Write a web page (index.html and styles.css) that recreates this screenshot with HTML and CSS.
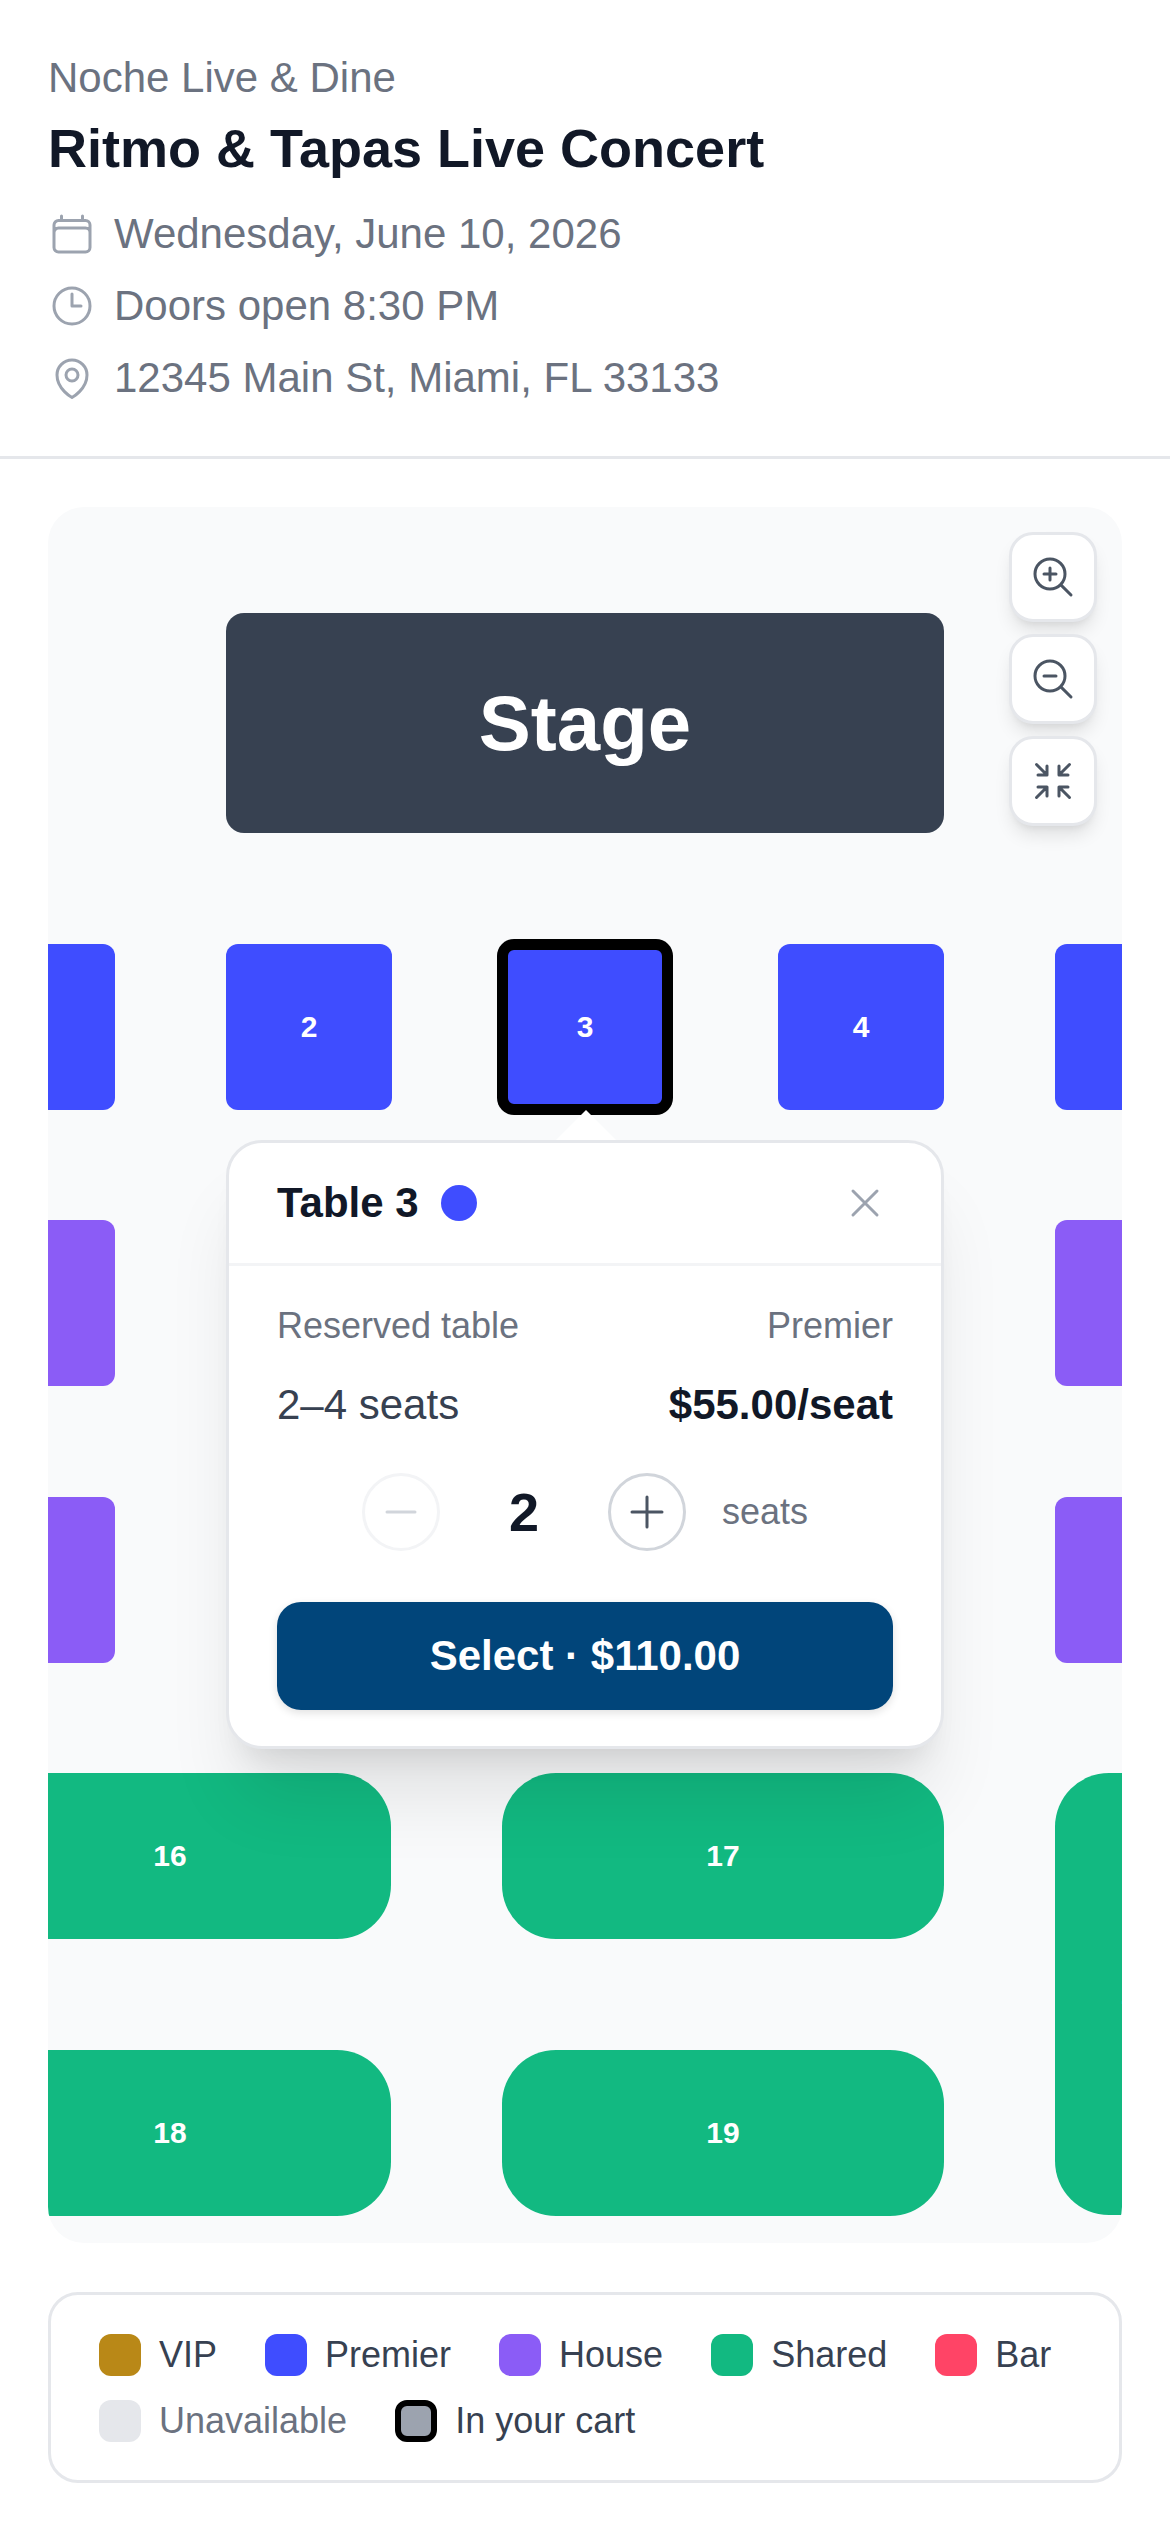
FILE: index.html
```html
<!DOCTYPE html>
<html lang="en">
<head>
    <meta charset="UTF-8">
    <meta name="viewport" content="width=device-width, initial-scale=1.0">
    <title>Ritmo &amp; Tapas Live Concert</title>
    <link rel="stylesheet" href="styles.css">
</head>
<body>
    <header class="event-header">
        <p class="venue">Noche Live &amp; Dine</p>
        <h1 class="event-title">Ritmo &amp; Tapas Live Concert</h1>
        <ul class="event-info">
            <li>
                <svg class="info-icon" viewBox="0 0 24 24"><path d="M6.75 3v2.25M17.25 3v2.25M3 18.75V7.5a2.25 2.25 0 0 1 2.25-2.25h13.5A2.25 2.25 0 0 1 21 7.5v11.25m-18 0A2.25 2.25 0 0 0 5.25 21h13.5A2.25 2.25 0 0 0 21 18.75m-18 0v-7.5A2.25 2.25 0 0 1 5.25 9h13.5A2.25 2.25 0 0 1 21 11.25v7.5"/></svg>
                Wednesday, June 10, 2026
            </li>
            <li>
                <svg class="info-icon" viewBox="0 0 24 24"><path d="M12 6v6h4.5m4.5 0a9 9 0 1 1-18 0 9 9 0 0 1 18 0Z"/></svg>
                Doors open 8:30 PM
            </li>
            <li>
                <svg class="info-icon" viewBox="0 0 24 24"><path d="M15 10.5a3 3 0 1 1-6 0 3 3 0 0 1 6 0Z"/><path d="M19.5 10.5c0 7.142-7.5 11.25-7.5 11.25S4.5 17.642 4.5 10.5a7.5 7.5 0 1 1 15 0Z"/></svg>
                12345 Main St, Miami, FL 33133
            </li>
        </ul>
    </header>

    <main class="content">
        <section class="seat-map">
            <div class="stage">Stage</div>

            <div class="table premier col-1 row-1"></div>
            <div class="table premier col-2 row-1">2</div>
            <div class="table premier selected col-3 row-1">3</div>
            <div class="table premier col-4 row-1">4</div>
            <div class="table premier col-5 row-1"></div>

            <div class="table house col-1 row-2"></div>
            <div class="table house col-5 row-2"></div>
            <div class="table house col-1 row-3"></div>
            <div class="table house col-5 row-3"></div>

            <div class="table shared wide col-1 row-4">16</div>
            <div class="table shared wide col-3 row-4">17</div>
            <div class="table shared wide col-1 row-5">18</div>
            <div class="table shared wide col-3 row-5">19</div>
            <div class="table shared tall col-5 row-4">20</div>

            <div class="map-controls">
                <button class="map-btn" aria-label="Zoom in">
                    <svg viewBox="0 0 24 24"><path d="m21 21-5.197-5.197m0 0A7.5 7.5 0 1 0 5.196 5.196a7.5 7.5 0 0 0 10.607 10.607ZM10.5 7.5v6m3-3h-6"/></svg>
                </button>
                <button class="map-btn" aria-label="Zoom out">
                    <svg viewBox="0 0 24 24"><path d="m21 21-5.197-5.197m0 0A7.5 7.5 0 1 0 5.196 5.196a7.5 7.5 0 0 0 10.607 10.607ZM13.5 10.5h-6"/></svg>
                </button>
                <button class="map-btn" aria-label="Reset">
                    <svg viewBox="0 0 24 24"><path d="M9 9V4.5M9 9H4.5M9 9 3.75 3.75M9 15v4.5M9 15H4.5M9 15l-5.25 5.25M15 9h4.5M15 9V4.5M15 9l5.25-5.25M15 15h4.5M15 15v4.5m0-4.5 5.25 5.25"/></svg>
                </button>
            </div>

            <div class="popover">
                <div class="popover-head">
                    <span class="popover-title">Table 3</span>
                    <span class="popover-dot"></span>
                    <button class="popover-close" aria-label="Close">
                        <svg viewBox="0 0 24 24"><path d="M6 18 18 6M6 6l12 12"/></svg>
                    </button>
                </div>
                <div class="popover-body">
                    <div class="popover-row muted">
                        <span>Reserved table</span>
                        <span>Premier</span>
                    </div>
                    <div class="popover-row price-row">
                        <span>2–4 seats</span>
                        <strong>$55.00/seat</strong>
                    </div>
                    <div class="stepper">
                        <button class="step-btn disabled" aria-label="Less">
                            <svg viewBox="0 0 24 24"><path d="M5 12h14"/></svg>
                        </button>
                        <span class="step-count">2</span>
                        <button class="step-btn" aria-label="More">
                            <svg viewBox="0 0 24 24"><path d="M12 4.5v15m7.5-7.5h-15"/></svg>
                        </button>
                        <span class="step-label">seats</span>
                    </div>
                    <button class="select-btn">Select · $110.00</button>
                </div>
            </div>
        </section>

        <section class="legend">
            <div class="legend-item"><span class="swatch vip"></span>VIP</div>
            <div class="legend-item"><span class="swatch premier"></span>Premier</div>
            <div class="legend-item"><span class="swatch house"></span>House</div>
            <div class="legend-item"><span class="swatch shared"></span>Shared</div>
            <div class="legend-item"><span class="swatch bar"></span>Bar</div>
            <div class="legend-item off"><span class="swatch unavailable"></span>Unavailable</div>
            <div class="legend-item"><span class="swatch in-cart"></span>In your cart</div>
        </section>
    </main>
</body>
</html>
```

FILE: styles.css
```css
* {
    box-sizing: border-box;
}

body {
    margin: 0;
    background: #ffffff;
    font-family: "Liberation Sans", Arial, sans-serif;
    color: #111827;
}

button {
    font-family: inherit;
    padding: 0;
    cursor: pointer;
}

svg {
    display: block;
    fill: none;
    stroke: currentColor;
    stroke-width: 1.5;
    stroke-linecap: round;
    stroke-linejoin: round;
}

/* Header */
.event-header {
    padding: 48px 48px 48px;
    border-bottom: 3px solid #e5e7eb;
}

.venue {
    margin: 0;
    font-size: 42px;
    line-height: 60px;
    color: #6b7280;
}

.event-title {
    margin: 4px 0 20px;
    font-size: 54px;
    line-height: 72px;
    font-weight: 700;
    color: #111827;
}

.event-info {
    list-style: none;
    margin: 0;
    padding: 0;
    display: flex;
    flex-direction: column;
    gap: 12px;
}

.event-info li {
    display: flex;
    align-items: center;
    gap: 18px;
    font-size: 42px;
    line-height: 60px;
    color: #6b7280;
}

.info-icon {
    width: 48px;
    height: 48px;
    color: #9ca3af;
    flex-shrink: 0;
}

/* Main */
.content {
    padding: 48px;
    display: flex;
    flex-direction: column;
    gap: 49px;
}

.seat-map {
    position: relative;
    height: 1736px;
    background: #f9fafb;
    border-radius: 36px;
    overflow: hidden;
}

.stage {
    position: absolute;
    left: 178px;
    top: 106px;
    width: 718px;
    height: 220px;
    display: flex;
    align-items: center;
    justify-content: center;
    background: #374151;
    border-radius: 18px;
    color: #ffffff;
    font-size: 78px;
    font-weight: 700;
}

/* Tables sit on a free canvas */
.table {
    position: absolute;
    width: 166px;
    height: 166px;
    display: flex;
    align-items: center;
    justify-content: center;
    border-radius: 12px;
    color: #ffffff;
    font-size: 30px;
    font-weight: 700;
}

.table.wide {
    width: 442px;
    border-radius: 54px;
}

.table.tall {
    height: 442px;
    border-radius: 54px;
}

.table.selected {
    border: 6px solid #000000;
    box-shadow: 0 0 0 5px #000000;
}

.col-1 { left: -99px; }
.col-2 { left: 178px; }
.col-3 { left: 454px; }
.col-4 { left: 730px; }
.col-5 { left: 1007px; }

.row-1 { top: 437px; }
.row-2 { top: 713px; }
.row-3 { top: 990px; }
.row-4 { top: 1266px; }
.row-5 { top: 1543px; }

.premier { background: #3f4dff; }
.house { background: #8b5cf6; }
.shared { background: #12b981; }
.vip { background: #b98817; }
.bar { background: #ff4466; }

/* Zoom buttons */
.map-controls {
    position: absolute;
    top: 25px;
    right: 25px;
    display: flex;
    flex-direction: column;
    gap: 12px;
}

.map-btn {
    width: 88px;
    height: 90px;
    display: flex;
    align-items: center;
    justify-content: center;
    background: #ffffff;
    border: 3px solid #e5e7eb;
    border-radius: 24px;
    box-shadow: 0 12px 18px -3px rgba(0, 0, 0, 0.1), 0 6px 9px -6px rgba(0, 0, 0, 0.1);
    color: #4b5563;
}

.map-btn svg {
    width: 48px;
    height: 48px;
}

/* Popover */
.popover {
    position: absolute;
    left: 178px;
    top: 633px;
    width: 718px;
    background: #ffffff;
    border: 3px solid #e5e7eb;
    border-radius: 36px;
    box-shadow: 0 60px 75px -15px rgba(0, 0, 0, 0.1), 0 24px 30px -18px rgba(0, 0, 0, 0.1);
}

.popover::before {
    content: "";
    position: absolute;
    left: 327px;
    top: -33px;
    width: 60px;
    height: 30px;
    background: #ffffff;
    clip-path: polygon(50% 0, 100% 100%, 0 100%);
}

.popover-head {
    height: 123px;
    padding: 0 48px;
    display: flex;
    align-items: center;
    gap: 22px;
    border-bottom: 3px solid #f3f4f6;
}

.popover-title {
    font-size: 42px;
    font-weight: 700;
    color: #111827;
}

.popover-dot {
    width: 36px;
    height: 36px;
    border-radius: 50%;
    background: #3f4dff;
}

.popover-close {
    margin-left: auto;
    margin-right: 4px;
    width: 48px;
    height: 48px;
    background: none;
    border: none;
    color: #9ca3af;
}

.popover-body {
    padding: 36px 48px;
}

.popover-row {
    display: flex;
    align-items: center;
    justify-content: space-between;
}

.popover-row.muted {
    font-size: 36px;
    line-height: 48px;
    color: #6b7280;
}

.price-row {
    margin-top: 28px;
    font-size: 42px;
    line-height: 54px;
    color: #374151;
}

.price-row strong {
    color: #111827;
}

.stepper {
    margin-top: 41px;
    display: flex;
    align-items: center;
    justify-content: center;
    gap: 36px;
}

.step-btn {
    width: 78px;
    height: 78px;
    display: flex;
    align-items: center;
    justify-content: center;
    background: #ffffff;
    border: 3px solid #d1d5db;
    border-radius: 50%;
    color: #4b5563;
}

.step-btn svg {
    width: 48px;
    height: 48px;
}

.step-btn.disabled {
    border-color: #f3f4f6;
    color: #d1d5db;
}

.step-count {
    width: 96px;
    text-align: center;
    font-size: 54px;
    font-weight: 700;
    color: #111827;
}

.step-label {
    font-size: 36px;
    color: #6b7280;
}

.select-btn {
    display: block;
    width: 100%;
    height: 108px;
    margin-top: 51px;
    background: #01457a;
    border: none;
    border-radius: 24px;
    box-shadow: 0 3px 9px rgba(0, 0, 0, 0.12);
    color: #ffffff;
    font-size: 42px;
    font-weight: 700;
}

/* Legend */
.legend {
    display: flex;
    flex-wrap: wrap;
    gap: 18px 48px;
    padding: 36px 48px 35px;
    border: 3px solid #e5e7eb;
    border-radius: 30px;
}

.legend-item {
    display: flex;
    align-items: center;
    gap: 18px;
    font-size: 36px;
    line-height: 48px;
    color: #374151;
}

.legend-item.off {
    color: #6b7280;
}

.swatch {
    width: 42px;
    height: 42px;
    border-radius: 12px;
    flex-shrink: 0;
}

.swatch.unavailable {
    background: #e5e7eb;
}

.swatch.in-cart {
    background: #9ca3af;
    border: 6px solid #000000;
}
```
